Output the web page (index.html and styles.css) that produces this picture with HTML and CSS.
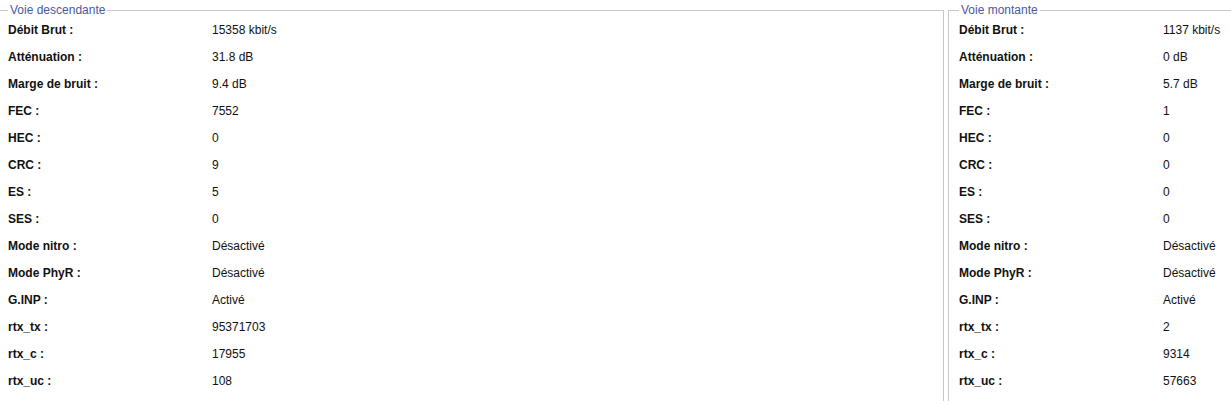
FILE: index.html
```html
<!DOCTYPE html>
<html lang="fr">
<head>
    <meta charset="UTF-8">
    <title>Statistiques ADSL</title>
    <link rel="stylesheet" href="styles.css">
</head>
<body>
    <div class="lines">
        <!-- Voie descendante -->
        <fieldset class="line line-down">
            <legend>Voie descendante</legend>
            <div class="stats">
                <span class="label">Débit Brut :</span><span class="value">15358 kbit/s</span>
                <span class="label">Atténuation :</span><span class="value">31.8 dB</span>
                <span class="label">Marge de bruit :</span><span class="value">9.4 dB</span>
                <span class="label">FEC :</span><span class="value">7552</span>
                <span class="label">HEC :</span><span class="value">0</span>
                <span class="label">CRC :</span><span class="value">9</span>
                <span class="label">ES :</span><span class="value">5</span>
                <span class="label">SES :</span><span class="value">0</span>
                <span class="label">Mode nitro :</span><span class="value">Désactivé</span>
                <span class="label">Mode PhyR :</span><span class="value">Désactivé</span>
                <span class="label">G.INP :</span><span class="value">Activé</span>
                <span class="label">rtx_tx :</span><span class="value">95371703</span>
                <span class="label">rtx_c :</span><span class="value">17955</span>
                <span class="label">rtx_uc :</span><span class="value">108</span>
            </div>
        </fieldset>

        <!-- Voie montante -->
        <fieldset class="line line-up">
            <legend>Voie montante</legend>
            <div class="stats">
                <span class="label">Débit Brut :</span><span class="value">1137 kbit/s</span>
                <span class="label">Atténuation :</span><span class="value">0 dB</span>
                <span class="label">Marge de bruit :</span><span class="value">5.7 dB</span>
                <span class="label">FEC :</span><span class="value">1</span>
                <span class="label">HEC :</span><span class="value">0</span>
                <span class="label">CRC :</span><span class="value">0</span>
                <span class="label">ES :</span><span class="value">0</span>
                <span class="label">SES :</span><span class="value">0</span>
                <span class="label">Mode nitro :</span><span class="value">Désactivé</span>
                <span class="label">Mode PhyR :</span><span class="value">Désactivé</span>
                <span class="label">G.INP :</span><span class="value">Activé</span>
                <span class="label">rtx_tx :</span><span class="value">2</span>
                <span class="label">rtx_c :</span><span class="value">9314</span>
                <span class="label">rtx_uc :</span><span class="value">57663</span>
            </div>
        </fieldset>
    </div>
</body>
</html>
```

FILE: styles.css
```css
body {
    margin: 0;
    background-color: #ffffff;
    font-family: 'Liberation Sans', Arial, sans-serif;
    font-size: 12px;
    color: #111111;
    overflow: hidden;
}

.lines {
    display: flex;
    gap: 4px;
    margin-left: -3px;
    width: 1300px;
}

.line {
    margin: 4px 0 0 0;
    padding: 0 10px 20px 10px;
    border: 1px solid #c8c8c8;
    min-width: 0;
}

.line-down {
    flex: 0 0 947px;
    box-sizing: border-box;
}

.line-up {
    flex: 1 1 auto;
}

legend {
    padding: 0 2px;
    margin-left: 0;
    line-height: 12px;
    color: #4a5a9a;
}

.stats {
    display: grid;
    grid-template-columns: 204px 1fr;
    grid-auto-rows: 27px;
    align-items: center;
}

.label {
    font-weight: bold;
    color: #111111;
}

.value {
    color: #111111;
}
```
